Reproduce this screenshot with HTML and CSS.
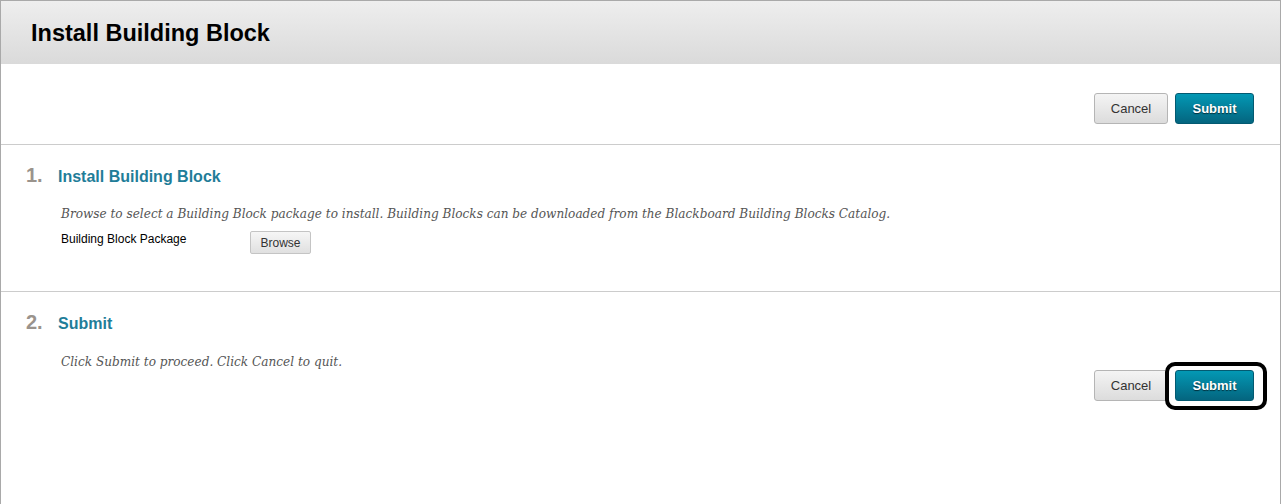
FILE: index.html
```html
<!DOCTYPE html>
<html>
<head>
<meta charset="utf-8">
<title>Install Building Block</title>
<link rel="stylesheet" href="styles.css">
</head>
<body>
<div class="page">
  <header class="page-header">
    <h1 class="page-title">Install Building Block</h1>
  </header>
  <div class="top-actions">
    <button class="btn btn-cancel">Cancel</button>
    <button class="btn btn-submit">Submit</button>
  </div>
  <section class="step">
    <h2 class="step-title"><span class="step-num">1.</span><span class="step-name">Install Building Block</span></h2>
    <p class="step-desc">Browse to select a Building Block package to install. Building Blocks can be downloaded from the Blackboard Building Blocks Catalog.</p>
    <div class="field">
      <label class="field-label">Building Block Package</label>
      <button class="btn-browse">Browse</button>
    </div>
  </section>
  <section class="step step-last">
    <h2 class="step-title"><span class="step-num">2.</span><span class="step-name">Submit</span></h2>
    <p class="step-desc">Click Submit to proceed. Click Cancel to quit.</p>
    <div class="bottom-actions">
      <button class="btn btn-cancel">Cancel</button>
      <button class="btn btn-submit highlighted">Submit</button>
    </div>
  </section>
</div>
</body>
</html>
```

FILE: styles.css
```css
html, body {
  margin: 0;
  padding: 0;
  background: #ffffff;
}
body {
  font-family: "Liberation Sans", Arial, sans-serif;
  height: 504px;
  overflow: hidden;
}
.page {
  border: 1px solid #a9a9a9;
  border-bottom: none;
  height: 520px;
  box-sizing: border-box;
}
.page-header {
  height: 63px;
  background: linear-gradient(#eeeeee, #dadada);
  display: flex;
  align-items: center;
  padding-left: 30px;
}
.page-title {
  margin: 0;
  font-size: 23.5px;
  font-weight: bold;
  color: #000;
  padding-top: 2px;
}
.top-actions {
  display: flex;
  justify-content: flex-end;
  gap: 7px;
  padding: 29px 26px 20px 0;
  border-bottom: 1px solid #cccccc;
}
.btn {
  height: 31px;
  border-radius: 3px;
  font-family: "Liberation Sans", Arial, sans-serif;
  font-size: 13px;
  padding: 0;
  cursor: pointer;
}
.btn-cancel {
  width: 74px;
  color: #333;
  background: linear-gradient(#f4f4f4, #dcdcdc);
  border: 1px solid #b5b5b5;
}
.btn-submit {
  width: 79px;
  color: #fff;
  font-weight: bold;
  background: linear-gradient(#0398b4, #04657f);
  border: 1px solid #035a71;
  text-shadow: 0 1px 1px #022f3b;
}
.step {
  padding: 19px 0 0 25px;
  border-bottom: 1px solid #cccccc;
  height: 147px;
  box-sizing: border-box;
}
.step-last {
  border-bottom: none;
}
.step-title {
  margin: 0;
  display: flex;
  align-items: baseline;
}
.step-num {
  font-size: 20px;
  font-weight: bold;
  color: #9a938c;
  width: 32px;
}
.step-name {
  font-size: 16px;
  font-weight: bold;
  color: #1f7d99;
}
.step-desc {
  margin: 20px 0 0 35px;
  font-family: "DejaVu Serif", Georgia, serif;
  font-style: italic;
  font-size: 12.1px;
  color: #555555;
}
.step-last .step-desc {
  margin-top: 21px;
}
.field {
  display: flex;
  align-items: flex-start;
  margin: 10px 0 0 35px;
}
.field-label {
  font-size: 12px;
  line-height: 12px;
  padding-top: 2px;
  color: #000;
  width: 189px;
}
.btn-browse {
  width: 61px;
  height: 23px;
  font-family: "Liberation Sans", Arial, sans-serif;
  font-size: 12px;
  color: #333;
  background: linear-gradient(#f6f6f6, #e0e0e0);
  border: 1px solid #c4c4c4;
  border-radius: 2px;
  padding: 0;
}
.bottom-actions {
  display: flex;
  justify-content: flex-end;
  gap: 7px;
  margin-top: 1px;
  padding-right: 26px;
}
.highlighted {
  position: relative;
}
.highlighted::after {
  content: "";
  position: absolute;
  left: -11px;
  top: -9px;
  right: -14px;
  bottom: -10px;
  border: 4px solid #000;
  border-radius: 10px;
}
```
